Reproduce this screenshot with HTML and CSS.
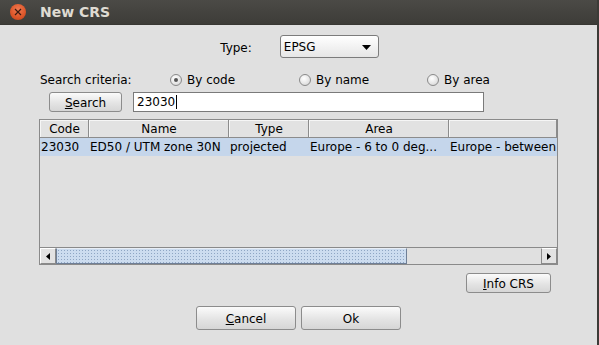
FILE: index.html
```html
<!DOCTYPE html>
<html lang="en">
<head>
    <meta charset="UTF-8">
    <title>New CRS</title>
    <link rel="stylesheet" href="styles.css">
</head>
<body>
    <div class="window">
        <div class="titlebar">
            <span class="close-btn">
                <svg width="8" height="8" viewBox="0 0 8 8"><path d="M1 1 L7 7 M7 1 L1 7" stroke="#3a1a10" stroke-width="1.2"/></svg>
            </span>
            <span class="title">New CRS</span>
        </div>

        <div class="content">
            <div class="type-row">
                <label>Type:</label>
                <div class="combo">
                    <span>EPSG</span>
                    <svg class="combo-arrow" width="9" height="5" viewBox="0 0 9 5"><path d="M0 0 H9 L4.5 5 Z" fill="#000"/></svg>
                </div>
            </div>

            <div class="criteria-row">
                <span>Search criteria:</span>
                <span class="radio checked"><i></i>By code</span>
                <span class="radio"><i></i>By name</span>
                <span class="radio"><i></i>By area</span>
            </div>

            <div class="search-row">
                <button class="btn search-btn"><u>S</u>earch</button>
                <div class="text-field">23030<span class="caret"></span></div>
            </div>

            <div class="table-box">
                <div class="table-view">
                    <div class="table-row header">
                        <div class="cell c-code">Code</div>
                        <div class="cell c-name">Name</div>
                        <div class="cell c-type">Type</div>
                        <div class="cell c-area">Area</div>
                        <div class="cell c-desc"></div>
                    </div>
                    <div class="table-row selected">
                        <div class="cell c-code">23030</div>
                        <div class="cell c-name">ED50 / UTM zone 30N</div>
                        <div class="cell c-type">projected</div>
                        <div class="cell c-area">Europe - 6 to 0 deg...</div>
                        <div class="cell c-desc">Europe - between 6°W and 0°W</div>
                    </div>
                </div>
                <div class="hscroll">
                    <div class="arrow-btn">
                        <svg width="4" height="7" viewBox="0 0 4 7"><path d="M4 0 V7 L0 3.5 Z" fill="#000"/></svg>
                    </div>
                    <div class="thumb"></div>
                    <div class="track"></div>
                    <div class="arrow-btn">
                        <svg width="4" height="7" viewBox="0 0 4 7"><path d="M0 0 V7 L4 3.5 Z" fill="#000"/></svg>
                    </div>
                </div>
            </div>

            <div class="info-row">
                <button class="btn info-btn"><u>I</u>nfo CRS</button>
            </div>

            <div class="button-row">
                <button class="btn dialog-btn"><u>C</u>ancel</button>
                <button class="btn dialog-btn">Ok</button>
            </div>
        </div>
    </div>
</body>
</html>
```

FILE: styles.css
```css
body {
    margin: 0;
    padding: 0;
    background-color: #3c3b37;
    font-family: "DejaVu Sans", sans-serif;
    font-size: 12px;
    color: #000;
    overflow: hidden;
}
.window {
    width: 597px;
    height: 345px;
    background-color: #e0e0e0;
    display: flex;
    flex-direction: column;
}
.titlebar {
    height: 25px;
    background: linear-gradient(#4b4a46, #3d3c38);
    display: flex;
    align-items: center;
    border-bottom: 1px solid #383733;
    box-sizing: border-box;
}
.close-btn {
    width: 16px;
    height: 16px;
    border-radius: 50%;
    margin-left: 10px;
    background: radial-gradient(circle at 50% 35%, #f07a52, #dc5528 60%, #b9411b);
    display: flex;
    align-items: center;
    justify-content: center;
}
.title {
    margin-left: 14px;
    font-weight: bold;
    font-size: 14px;
    color: #dfdbd2;
}
.content {
    display: flex;
    flex-direction: column;
}
.type-row {
    margin-top: 10px;
    display: flex;
    justify-content: center;
    align-items: center;
    gap: 28px;
    height: 23px;
}
.type-row label {
    margin-left: 2px;
    padding-top: 2px;
}
.combo {
    width: 99px;
    height: 23px;
    box-sizing: border-box;
    border: 1px solid #7c7c7c;
    border-radius: 3px;
    background: linear-gradient(#ffffff, #e6e6e6);
    display: flex;
    align-items: center;
    justify-content: space-between;
    padding: 1px 7px 0 3px;
}
.criteria-row {
    margin-top: 13px;
    height: 16px;
    display: grid;
    grid-template-columns: 130px 129px 128px auto;
    align-items: center;
    padding-left: 40px;
    padding-top: 1px;
}
.radio {
    display: flex;
    align-items: center;
}
.radio i {
    width: 12px;
    height: 12px;
    box-sizing: border-box;
    border: 1px solid #8a8a8a;
    border-radius: 50%;
    background: radial-gradient(circle at 40% 35%, #ffffff, #e4e4e4 60%, #c8c8c8);
    margin-right: 5px;
    display: flex;
    align-items: center;
    justify-content: center;
}
.radio.checked i::after {
    content: "";
    width: 4px;
    height: 4px;
    border-radius: 50%;
    background-color: #555;
}
.search-row {
    margin-top: 4px;
    display: flex;
    align-items: center;
    gap: 11px;
    padding-left: 49px;
    height: 20px;
}
.btn {
    font-family: "DejaVu Sans", sans-serif;
    font-size: 12px;
    color: #000;
    border: 1px solid #8c8c8c;
    border-radius: 3px;
    background: linear-gradient(#fbfbfb, #e4e4e4 55%, #d6d6d6);
    padding: 1px 0 0;
    box-sizing: border-box;
}
.search-btn {
    width: 73px;
    height: 20px;
}
.text-field {
    width: 351px;
    height: 20px;
    box-sizing: border-box;
    border: 1px solid #7a7a7a;
    background-color: #fff;
    padding-left: 3px;
    line-height: 18px;
    display: flex;
    align-items: center;
}
.caret {
    width: 1px;
    height: 14px;
    background-color: #000;
    margin-left: 1px;
}
.table-box {
    margin-top: 7px;
    margin-left: 39px;
    width: 519px;
    height: 146px;
    box-sizing: border-box;
    border: 1px solid #8a8a8a;
    display: flex;
    flex-direction: column;
}
.table-view {
    flex: 1;
    overflow: hidden;
}
.table-row {
    display: flex;
    height: 18px;
    white-space: nowrap;
}
.cell {
    flex-shrink: 0;
    box-sizing: border-box;
    line-height: 19px;
    overflow: hidden;
    padding-left: 1px;
}
.header .cell {
    text-align: center;
    border-right: 1px solid #8c8c8c;
    border-bottom: 1px solid #8c8c8c;
    background-color: #e2e2e2;
    box-shadow: inset 1px 1px 0 #f6f6f6;
}
.selected {
    background-color: #c5d6eb;
}
.c-code { width: 49px; }
.c-name { width: 140px; }
.c-type { width: 80px; }
.c-area { width: 140px; }
.c-desc { width: 108px; }
.hscroll {
    height: 17px;
    display: flex;
    border-top: 1px solid #8a8a8a;
    box-sizing: border-box;
}
.arrow-btn {
    width: 16px;
    box-sizing: border-box;
    border: 1px solid #fff;
    border-right-color: #8a8a8a;
    border-bottom-color: #8a8a8a;
    background-color: #e2e2e2;
    display: flex;
    align-items: center;
    justify-content: center;
}
.hscroll .arrow-btn:last-child {
    border-left: 1px solid #8a8a8a;
}
.thumb {
    width: 351px;
    box-sizing: border-box;
    border: 1px solid #6f7f96;
    border-top-color: #e8eef6;
    background-color: #ccdcef;
    background-image: radial-gradient(#8fa6c4 0.7px, transparent 0.8px);
    background-size: 3px 3px;
}
.track {
    flex: 1;
    background-color: #e0e0e0;
}
.info-row {
    margin-top: 8px;
    display: flex;
    justify-content: flex-end;
    padding-right: 46px;
}
.info-btn {
    width: 85px;
    height: 20px;
}
.button-row {
    margin-top: 13px;
    display: flex;
    justify-content: center;
    gap: 5px;
}
.dialog-btn {
    width: 100px;
    height: 24px;
}
```
